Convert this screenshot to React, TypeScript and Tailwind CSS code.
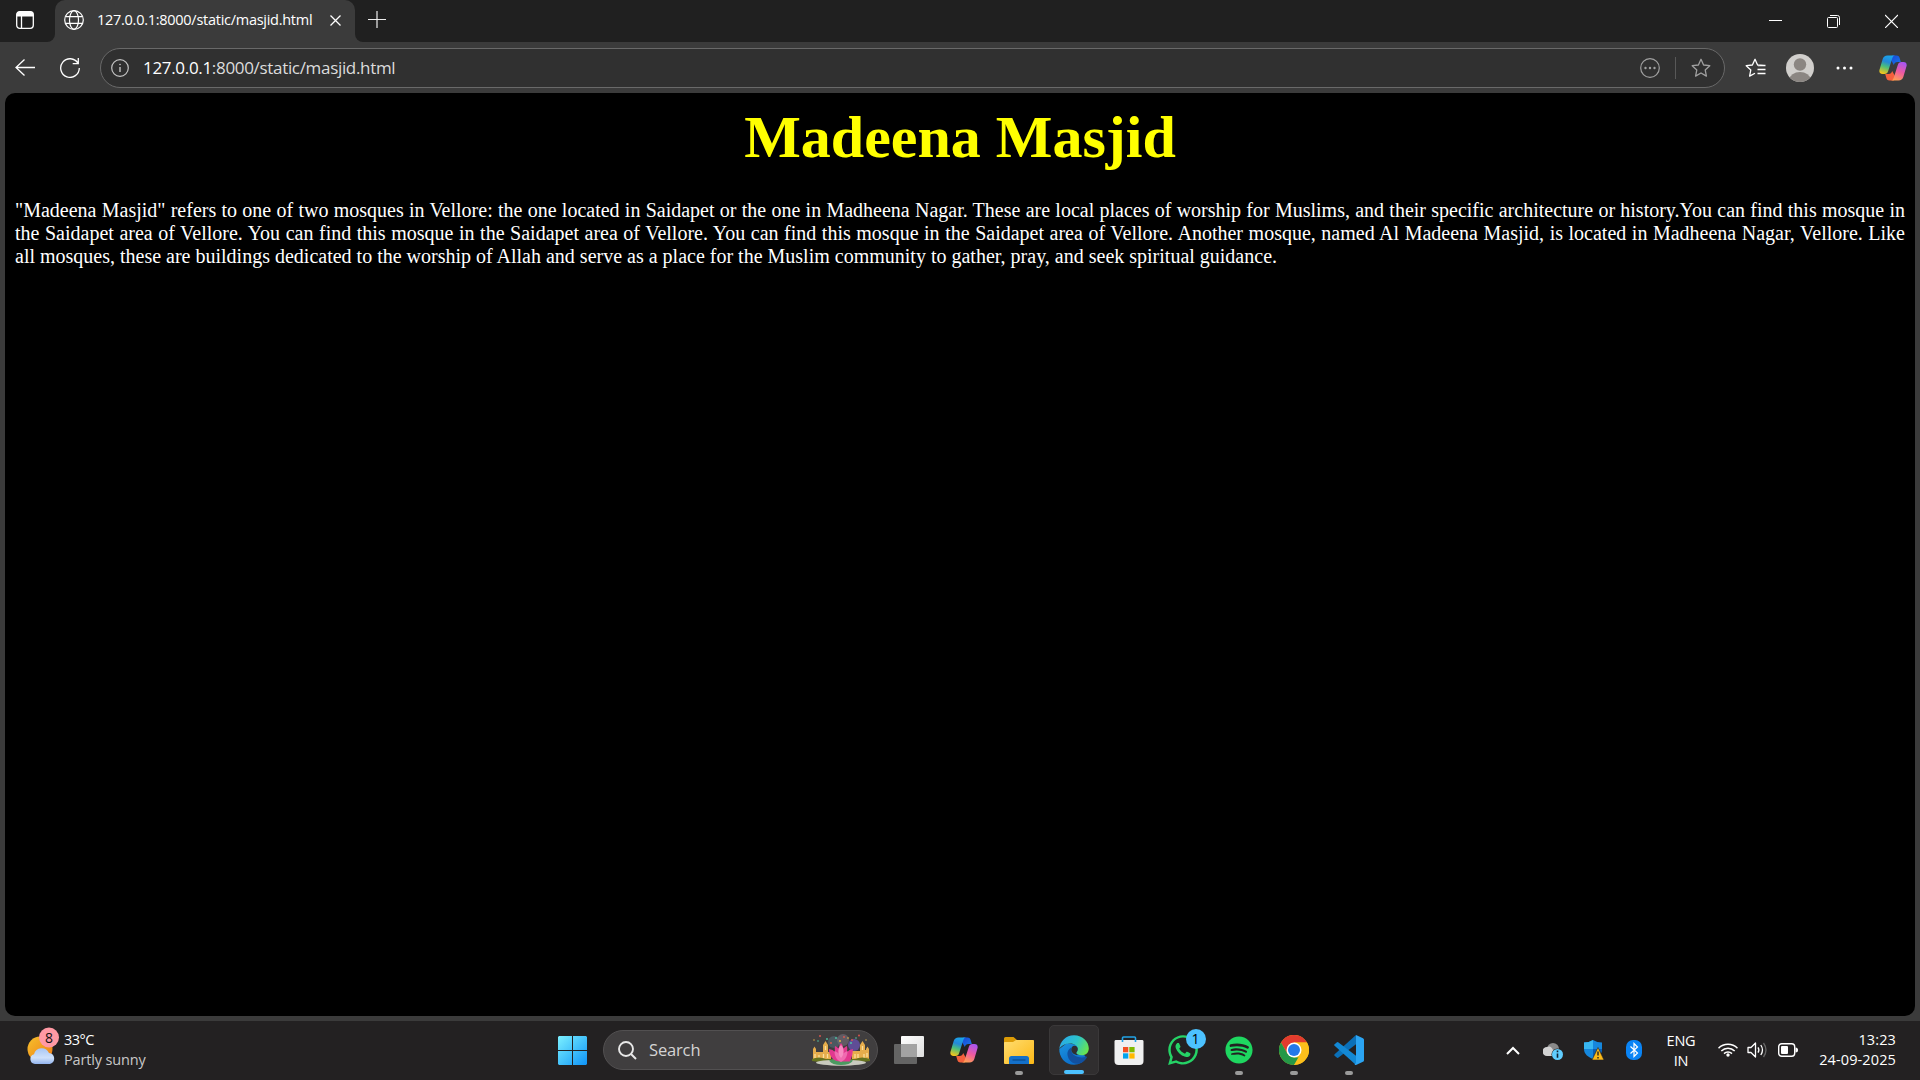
import React from "react";
import { FaSpotify, FaWhatsapp } from "react-icons/fa";

const ui = "font-['Open_Sans','Noto_Sans',sans-serif]";

function CopilotIcon({ id, className }: { id: string; className: string }) {
  return (
    <svg viewBox="0 0 28 26" className={className}>
      <defs>
        <linearGradient id={id + "a"} x1="0.6" y1="0" x2="0.3" y2="1">
          <stop offset="0" stopColor="#1aa5ea" />
          <stop offset="0.35" stopColor="#2488d8" />
          <stop offset="0.62" stopColor="#4bbf7a" />
          <stop offset="1" stopColor="#f4c51c" />
        </linearGradient>
        <linearGradient id={id + "b"} x1="0.7" y1="0" x2="0.3" y2="1">
          <stop offset="0" stopColor="#a855f0" />
          <stop offset="0.5" stopColor="#ee5aa0" />
          <stop offset="1" stopColor="#ffa052" />
        </linearGradient>
        <linearGradient id={id + "c"} x1="0" y1="0" x2="1" y2="1">
          <stop offset="0" stopColor="#1846d8" />
          <stop offset="1" stopColor="#1b7ae6" />
        </linearGradient>
      </defs>
      <path d="M13 0.5h4.5c2 0 2.8 1.2 3.3 3l1 3.6h-3.4c-2 0-3 1.2-3.6 3L12 5Z" fill={`url(#${id}c)`} />
      <path d="M15 25.500h-4.500c-2 0-2.800-1.200-3.300-3l-1-3.600h3.400c2 0 3-1.200 3.600-3L16 21Z" fill="#f4603c" />
      <path d="M8.500 0.500h8c-2 0-2.700 1.200-3.300 3l-4 12.400c-.8 2.200-1.700 3-3.700 3H3.500c-2.600 0-3.600-1.700-3-4.200L3.700 4C4.400 1.700 6 .5 8.500.5Z" fill={`url(#${id}a)`} />
      <path d="M19.500 25.500h-8c2 0 2.700-1.200 3.300-3l4-12.400c.8-2.200 1.700-3 3.700-3h2c2.600 0 3.600 1.700 3 4.200L24.300 22c-.7 2.300-2.300 3.500-4.800 3.500Z" fill={`url(#${id}b)`} />
    </svg>
  );
}

const starPath =
  "M10 1.300 12.600 7l6.200.7-4.600 4.200 1.200 6.200L10 15l-5.400 3.100 1.200-6.200L1.200 7.700 7.400 7Z";

function TabStrip() {
  return (
    <div className="flex h-[42px] bg-[#3b3b3b]">
      <div className="w-[55px] rounded-br-[8px] bg-[#202020] pl-4 pt-[11px]">
        <svg viewBox="0 0 18 18" className="h-[18px] w-[18px]" fill="none" stroke="#fff">
          <rect x="0.700" y="0.700" width="16.600" height="16.600" rx="3" strokeWidth="1.300" />
          <path d="M1 3.500a2.500 2.500 0 0 1 2.500-2.500h11A2.500 2.500 0 0 1 17 3.500V5H1Z" fill="#fff" />
          <path d="M5.500 5v12" strokeWidth="1.300" />
        </svg>
      </div>
      <div className="flex w-[300px] bg-[#202020]">
        <div className="flex h-[42px] w-[300px] items-start rounded-t-[10px] bg-[#3b3b3b]">
          <svg viewBox="0 0 20 20" className="ml-[9px] mt-[10px] h-5 w-5 shrink-0" fill="none" stroke="#fff" strokeWidth="1.200">
            <circle cx="10" cy="10" r="9.300" />
            <ellipse cx="10" cy="10" rx="4.500" ry="9.300" />
            <path d="M1.600 6.700h16.800M1.600 13.300h16.800" />
          </svg>
          <span className={`${ui} ml-[13px] mt-[9px] w-[233px] shrink-0 whitespace-nowrap text-[14.500px] leading-[22px] tracking-[-0.270px] text-white`}>
            127.0.0.1:8000/static/masjid.html
          </span>
          <svg viewBox="0 0 11 11" className="mt-[15px] h-[11px] w-[11px] shrink-0" stroke="#fff" strokeWidth="1.300">
            <path d="M.5.5l10 10M10.500.5l-10 10" />
          </svg>
        </div>
      </div>
      <div className="flex flex-1 rounded-bl-[8px] bg-[#202020]">
        <svg viewBox="0 0 18 18" className="ml-[13px] mt-[11px] h-[18px] w-[18px]" stroke="#eee" strokeWidth="1.200">
          <path d="M9 0v17M0 8.500h18" />
        </svg>
        <div className="ml-auto mr-[22px] mt-[14px] flex gap-[45px]">
          <svg viewBox="0 0 13 14" className="h-[14px] w-[13px]" stroke="#fff">
            <path d="M0 6.500h13" />
          </svg>
          <svg viewBox="0 0 13 14" className="h-[14px] w-[13px]" fill="none" stroke="#fff">
            <rect x="0.500" y="3.500" width="10" height="10" rx="1" />
            <path d="M3 1.500h7.500a2 2 0 0 1 2 2V11" />
          </svg>
          <svg viewBox="0 0 13 14" className="h-[14px] w-[13px]" stroke="#fff" strokeWidth="1.200">
            <path d="M0 1l13 13M13 1L0 14" />
          </svg>
        </div>
      </div>
    </div>
  );
}

function Toolbar() {
  return (
    <div className="flex h-[51px] items-start bg-[#3b3b3b] pt-[6px]">
      <svg viewBox="0 0 20 18" className="ml-[15px] mt-[11px] h-[18px] w-5" fill="none" stroke="#fff" strokeWidth="1.300">
        <path d="M20 8.500H1M9.500.5l-8.500 8 8.500 8" />
      </svg>
      <svg viewBox="0 0 20 20" className="ml-[25px] mt-[10px] h-5 w-5" fill="none" stroke="#fff" strokeWidth="1.300">
        <path d="M18 5.300A9.300 9.300 0 1 0 19.300 10M18.300 0v5.700h-5.600" />
      </svg>
      <div className="ml-5 flex h-10 w-[1625px] items-center rounded-full border border-[#696969] bg-[#303030]">
        <svg viewBox="0 0 18 18" className="ml-[10px] h-[18px] w-[18px]" fill="none" stroke="#c4c4c4" strokeWidth="1.200">
          <circle cx="9" cy="9" r="8.300" />
          <path d="M9 8v5" strokeWidth="1.400" />
          <circle cx="9" cy="5.500" r=".5" fill="#c4c4c4" strokeWidth=".7" />
        </svg>
        <span className={`${ui} ml-[14px] whitespace-nowrap text-[17px] leading-6 tracking-[-0.320px] text-[#dcdcdc]`}>
          <span className="text-white">127.0.0.1</span>:8000/static/masjid.html
        </span>
        <svg viewBox="0 0 20 20" className="ml-auto h-5 w-5" fill="none" stroke="#a0a0a0" strokeWidth="1.200">
          <circle cx="10" cy="10" r="9.300" />
          <g fill="#a0a0a0" stroke="none">
            <circle cx="5.500" cy="10" r="1.200" />
            <circle cx="10" cy="10" r="1.200" />
            <circle cx="14.500" cy="10" r="1.200" />
          </g>
        </svg>
        <div className="ml-[15px] h-[22px] w-px bg-[#585858]" />
        <svg viewBox="0 0 20 20" className="ml-[15px] mr-[13px] h-5 w-5" fill="none" stroke="#a0a0a0" strokeWidth="1.300" strokeLinejoin="round">
          <path d={starPath} />
        </svg>
      </div>
      <svg viewBox="0 0 21 20" className="ml-5 mt-[10px] h-5 w-[21px]" fill="none" stroke="#fff" strokeWidth="1.300" strokeLinejoin="round">
        <path d="M19 7.500 12.600 7 10 1.300 7.400 7l-6.200.7 4.600 4.200-1.200 6.200L10 15.200M13 7.500h7.500M12.500 11.500h8M12.500 15.500h8" />
      </svg>
      <svg viewBox="0 0 28 28" className="ml-5 mt-[6px] h-7 w-7">
        <defs>
          <clipPath id="avatar">
            <circle cx="14" cy="14" r="14" />
          </clipPath>
        </defs>
        <g clipPath="url(#avatar)">
          <rect width="28" height="28" fill="#d1cfcc" />
          <circle cx="14" cy="10.500" r="6.200" fill="#8b8682" />
          <ellipse cx="14" cy="25.500" rx="10.500" ry="7.500" fill="#8b8682" />
        </g>
      </svg>
      <svg viewBox="0 0 17 4" className="ml-[22px] mt-[18px] h-1 w-[17px]" fill="#fff">
        <circle cx="2" cy="2" r="1.500" />
        <circle cx="8.500" cy="2" r="1.500" />
        <circle cx="15" cy="2" r="1.500" />
      </svg>
      <CopilotIcon id="bar" className="ml-[26px] mt-[7px] h-[26px] w-7" />
    </div>
  );
}

function WebPage() {
  return (
    <div className="h-[928px] bg-[#3b3b3b] px-[5px]">
      <main className="h-[923px] overflow-hidden rounded-[10px] bg-black px-[10px] font-['Liberation_Serif',serif]">
        <h1 className="mt-[10px] h-[69px] text-center text-[60px] font-bold leading-[69px] text-[#ffff00]">
          Madeena Masjid
        </h1>
        <p className="mt-[27px] text-justify text-[20px] leading-[23px] text-white">
          "Madeena Masjid" refers to one of two mosques in Vellore: the one located in Saidapet or the one in Madheena
          Nagar. These are local places of worship for Muslims, and their specific architecture or history.You can find
          this mosque in the Saidapet area of Vellore. You can find this mosque in the Saidapet area of Vellore. You can
          find this mosque in the Saidapet area of Vellore. Another mosque, named Al Madeena Masjid, is located in
          Madheena Nagar, Vellore. Like all mosques, these are buildings dedicated to the worship of Allah and serve as
          a place for the Muslim community to gather, pray, and seek spiritual guidance.
        </p>
      </main>
    </div>
  );
}

function Weather() {
  return (
    <div className="flex w-[557px] pl-[27px]">
      <svg viewBox="0 0 32 38" className="mt-[6px] h-[38px] w-8">
        <defs>
          <linearGradient id="sun" x1="0" y1="0" x2="1" y2="1">
            <stop offset="0" stopColor="#f6c12c" />
            <stop offset="1" stopColor="#ee7a16" />
          </linearGradient>
          <linearGradient id="cloud" x1="0" y1="0" x2="0" y2="1">
            <stop offset="0" stopColor="#a9c7f5" />
            <stop offset=".6" stopColor="#cfe1fb" />
            <stop offset="1" stopColor="#92b4ee" />
          </linearGradient>
        </defs>
        <circle cx="13" cy="22" r="12.500" fill="url(#sun)" />
        <path d="M8 37a5 5 0 0 1-1-9.800 8 8 0 0 1 15-1.200 5.600 5.600 0 0 1 1 11Z" fill="url(#cloud)" />
        <circle cx="22" cy="10.500" r="10" fill="#ff99a4" />
        <text x="22" y="15.500" textAnchor="middle" fontSize="14" fill="#111" fontFamily="Open Sans">8</text>
      </svg>
      <div className={`${ui} ml-[5px] mt-[9px] whitespace-nowrap text-[14.500px] leading-5`}>
        <div className="tracking-[-0.500px] text-white">33°C</div>
        <div className="tracking-[-0.150px] text-[#c8c8c8]">Partly sunny</div>
      </div>
    </div>
  );
}

function SearchArt() {
  return (
    <svg viewBox="0 0 58 32" className="ml-auto mr-[7px] h-8 w-[58px]">
      <circle cx="22" cy="8" r="6" fill="#56707c" opacity=".55" />
      <circle cx="31" cy="6" r="6" fill="#77707c" opacity=".6" />
      <circle cx="42" cy="11" r="6" fill="#6a53b4" opacity=".75" />
      <g fill="#e6ad4c">
        <path d="M1 24V15l1.500-2.500L4 15v3h7v-7l2.500-4L16 11v7h3v7H1Z" />
        <path d="M57 24V15l-1.500-2.500L54 15v1h-1v-5l-2.500-4L48 11v6h-8v8h17Z" />
      </g>
      <path d="M3 20v4M7 21v3M13.500 12v4M11.500 20v4M15.500 20v4M43 20v4M46 20v4M50.500 12v4M52 20v4M55 19v4" stroke="#fbdf9c" strokeWidth="1.300" />
      <path d="M0 25q7-3 14 0h29q7-3 15 0v2q-29 5-58 0Z" fill="#66731f" />
      <ellipse cx="29" cy="28.700" rx="25" ry="3" fill="#c9cabf" />
      <path d="M17 26.500q12-5 24 0-3 4.500-12 4.500t-12-4.500Z" fill="#4b9a61" />
      <path d="M29 27.500C20 27.500 17 21 17 15q4 .5 6 3-.5-3 0-6 2 .5 3.500 2.500Q27 11 29 9q2 2 2.500 5.500 1.500-2 3.500-2.500.5 3 0 6 2-2.500 6-3 0 6-3 12.500Z" fill="#e2388f" />
      <path d="M29 28c-5-2-6.500-7-6.500-11 3 1 5.500 3 6.500 5 1-2 3.500-4 6.500-5 0 4-1.500 9-6.500 11Z" fill="#f06bb0" />
      <path d="M29 11c-3.500 3-3.500 9 0 13 3.500-4 3.500-10 0-13Z" fill="#f78cc2" />
      <g fill="#e2574f">
        <circle cx="8" cy="2" r=".9" /><circle cx="19" cy="9" r=".9" /><circle cx="47" cy="1.500" r=".9" /><circle cx="32" cy="3" r=".9" /><circle cx="40" cy="6" r=".9" />
      </g>
      <g fill="#4fc6a6">
        <circle cx="15" cy="5" r=".9" /><circle cx="24" cy="4" r=".9" /><circle cx="39" cy="9" r="1" /><circle cx="44" cy="4" r=".8" /><circle cx="6" cy="7" r=".8" />
      </g>
      <g fill="#f0c04a">
        <circle cx="28" cy="7" r=".9" /><circle cx="36" cy="4" r=".8" /><circle cx="2" cy="6" r=".7" /><circle cx="54" cy="6" r=".7" />
      </g>
    </svg>
  );
}

function Slot({ children, mark }: { children: React.ReactNode; mark?: boolean }) {
  return (
    <div className="flex w-[55px] flex-col items-center pt-[9px]">
      <div className="flex h-[39px] w-[55px] items-start justify-center">{children}</div>
      {mark && <div className="mt-[2px] h-1 w-2 rounded-full bg-[#9a9a9a]" />}
    </div>
  );
}

function EdgeIcon() {
  return (
    <svg viewBox="0 0 30 30" className="h-[30px] w-[30px]">
      <defs>
        <linearGradient id="edgeTop" x1="0" y1=".3" x2="1" y2=".7">
          <stop offset="0" stopColor="#2aa9e8" />
          <stop offset=".5" stopColor="#2cc3c9" />
          <stop offset="1" stopColor="#6be64b" />
        </linearGradient>
        <linearGradient id="edgeLeft" x1="0" y1="0" x2=".6" y2="1">
          <stop offset="0" stopColor="#1c94e0" />
          <stop offset="1" stopColor="#0a6bc8" />
        </linearGradient>
      </defs>
      <path d="M.3 14C0 22 6 29.800 15 29.800c5 0 10-3 12.300-7L18 10 8 8Z" fill="url(#edgeLeft)" />
      <path d="M.3 14C1 6 7 .2 15 .2c9 0 14.800 6.800 14.800 13 0 4.500-3 7-7 7-3.500 0-5.500-1.200-5.500-2.300 0-.9 1.400-1.400 1.400-4 0-3-3.200-5.400-7.600-5.400-4.600 0-9 2-10.800 5.500Z" fill="url(#edgeTop)" />
      <path d="M12.300 12.400c-4 2-5 6.600-2.700 11 2.700 5 9.400 7.400 14.400 3.300 2-1.600 3.400-3.300 3.900-4.500.3-.7-.4-1-1-.7-2.700 1.400-7.500 1.400-10.400-.4-3.600-2.200-5-5.500-4.200-8.700Z" fill="#12509f" />
      <path d="M15.500 10.800c2 .2 3.300 1.500 3.300 3.100 0 2.500-1.500 3-1.500 4 0 .8 1 1.600 3 2-4.800.6-8-2.300-8-5.200 0-2.300 1.400-3.900 3.200-3.900Z" fill="#302e2f" />
    </svg>
  );
}

function AppIcons() {
  return (
    <div className="flex">
      <Slot>
        <svg viewBox="0 0 30 28" className="mt-[6px] h-7 w-[30px]">
          <defs>
            <linearGradient id="pane" x1="0" y1="0" x2="1" y2="1">
              <stop offset="0" stopColor="#fff" />
              <stop offset="1" stopColor="#dedede" />
            </linearGradient>
          </defs>
          <rect x="7" y="0" width="23" height="21" rx="1" fill="url(#pane)" />
          <rect x="0" y="8" width="23" height="20" rx="1" fill="#646464" />
          <rect x="7" y="8" width="16" height="13" fill="#a3a3a3" />
        </svg>
      </Slot>
      <Slot>
        <CopilotIcon id="task" className="mt-[7px] h-[26px] w-7" />
      </Slot>
      <Slot mark>
        <svg viewBox="0 0 30 27" className="mt-[7px] h-[27px] w-[30px]">
          <defs>
            <linearGradient id="folder" x1="0" y1="0" x2="1" y2="1">
              <stop offset="0" stopColor="#ffdd70" />
              <stop offset="1" stopColor="#fcb816" />
            </linearGradient>
          </defs>
          <path d="M0 10V1.500Q0 0 1.500 0H9.500l3.500 3H28q2 0 2 2v5Z" fill="#dc9b06" />
          <path d="M0 5.500Q0 5 1 5H9L12 3H29Q30 3 30 4V26Q30 27 29 27H1Q0 27 0 26Z" fill="url(#folder)" />
          <path d="M5 27v-5.500Q5 19 7.500 19h15q2.500 0 2.500 2.500V27Z" fill="#1470c9" />
          <path d="M8.500 23h13" stroke="#0a4a8c" strokeWidth="1.200" />
        </svg>
      </Slot>
      <div className="flex w-[55px] justify-center pt-1">
        <div className="flex h-[50px] w-[50px] flex-col items-center rounded-[5px] border border-[#3a3839] bg-[#302e2f] pt-[9px]">
          <EdgeIcon />
          <div className="mt-[5px] h-1 w-5 shrink-0 rounded-full bg-[#4cc2ff]" />
        </div>
      </div>
      <Slot>
        <svg viewBox="0 0 30 29" className="mt-[6px] h-[29px] w-[30px]">
          <path d="M0.500 5.500Q0.500 4 1.500 4H28.500q1 0 1 1.500V25q0 4-4 4H4.500q-4 0-4-4Z" fill="#f0f0f0" />
          <path d="M8.500 6V2q0-1 1-1h11q1 0 1 1v4" fill="none" stroke="#22a4e8" strokeWidth="1.600" />
          <path d="M9 11h5.300v5.300H9Z" fill="#f25022" />
          <path d="M15.300 11h5.300v5.300h-5.300Z" fill="#7fba00" />
          <path d="M9 17.300h5.300v5.300H9Z" fill="#00a4ef" />
          <path d="M15.300 17.300h5.300v5.300h-5.300Z" fill="#ffb900" />
        </svg>
      </Slot>
      <Slot>
        <div className="relative mt-[5px]">
          <FaWhatsapp className="-ml-[2px] -mt-[2px] h-[34px] w-[34px] text-[#25d366]" />
          <div className={`${ui} absolute -right-[6px] -top-[6px] flex h-5 w-5 items-center justify-center rounded-full bg-[#4cc2ff] text-[14px] leading-none text-black`}>
            1
          </div>
        </div>
      </Slot>
      <Slot mark>
        <FaSpotify className="mt-[6px] h-7 w-7 text-[#1ed760]" />
      </Slot>
      <Slot mark>
        <svg viewBox="0 0 30 30" className="mt-[5px] h-[30px] w-[30px]">
          <circle cx="15" cy="15" r="15" fill="#fbbc12" />
          <path d="M2 7.500A15 15 0 0 1 28 7.500H15l-6.500 11.300Z" fill="#e33b2e" />
          <path d="M2 7.500 8.500 18.750 15 22.500h6.500L15 30A15 15 0 0 1 2 7.500Z" fill="#249847" />
          <path d="M28 7.500H15L21.500 18.750 15 30A15 15 0 0 0 28 7.500Z" fill="#fcbf1b" />
          <circle cx="15" cy="15" r="7.500" fill="#fff" />
          <circle cx="15" cy="15" r="6" fill="#2478e8" />
        </svg>
      </Slot>
      <Slot mark>
        <svg viewBox="0 0 30 30" className="mt-[5px] h-[30px] w-[30px]">
          <path d="M22 0 .6 19.300q-.8.800 0 1.500L2.700 22.600q.7.600 1.500.1L22 9.200Z" fill="#0b70b8" />
          <path d="M22 30 .6 10.700q-.8-.8 0-1.500L2.700 7.400q.7-.6 1.500-.1L22 20.800Z" fill="#1388d4" />
          <path d="M22 0l7 3.200q1 .5 1 1.500v20.600q0 1-1 1.500L22 30q-1 .1-1.500-.5L22 28Z" fill="#2ba4f2" />
        </svg>
      </Slot>
    </div>
  );
}

function SystemTray() {
  return (
    <div className={`${ui} ml-auto flex whitespace-nowrap text-[14.500px] leading-5 text-white`}>
      <svg viewBox="0 0 14 9" className="mt-[25px] h-[9px] w-[14px]" fill="none" stroke="#fff" strokeWidth="2">
        <path d="M1 8l6-6 6 6" />
      </svg>
      <svg viewBox="0 0 20 17" className="ml-[23px] mt-[22px] h-[17px] w-5">
        <circle cx="10" cy="6" r="6" fill="#8a8a8a" />
        <path d="M4 13a4.500 4.500 0 0 1 0-9q4-2 6 3l4 6Z" fill="#d2d2d2" />
        <circle cx="14.500" cy="11.500" r="6" fill="#232122" />
        <circle cx="14.500" cy="11.500" r="5.500" fill="#60cdff" />
        <path d="M14.500 10.500v4.300M14.500 7.500v1.700" stroke="#123" strokeWidth="1.600" />
      </svg>
      <svg viewBox="0 0 20 20" className="ml-[21px] mt-[19px] h-5 w-5">
        <path d="M9 0q4 2.500 9 2.500V9c0 5-4 8-9 10C4 17 0 14 0 9V2.500Q5 2.500 9 0Z" fill="#1687dc" />
        <path d="M9 0v9H0V2.500Q5 2.500 9 0Z" fill="#38b7f1" />
        <path d="M9 9h9c0 5-4 8-9 10Z" fill="#0a5db2" />
        <path d="M14 7.500 20 20H8Z" fill="#fcba19" stroke="#232122" strokeWidth=".6" />
        <path d="M14 11.500v4M14 17v1.500" stroke="#222" strokeWidth="1.400" />
      </svg>
      <svg viewBox="0 0 16 20" className="ml-[22px] mt-[19px] h-5 w-4">
        <rect width="16" height="20" rx="7" fill="#0a84f5" />
        <path d="M4.500 6.500l7 6.500L8 16.500v-13L11.500 7l-7 6.500" fill="none" stroke="#fff" strokeWidth="1.200" />
      </svg>
      <div className="ml-[23px] mt-[10px] w-[32px] text-center text-[14.500px] tracking-[-0.200px]">
        <div>ENG</div>
        <div>IN</div>
      </div>
      <svg viewBox="0 0 20 15" className="ml-[21px] mt-[21px] h-[15px] w-5" fill="none" stroke="#fff" strokeWidth="1.500">
        <path d="M.5 6.200a13.400 13.400 0 0 1 19 0M3.300 9a9.500 9.500 0 0 1 13.400 0M6 11.600a5.700 5.700 0 0 1 8 0" />
        <circle cx="10" cy="13" r="1.700" fill="#fff" stroke="none" />
      </svg>
      <svg viewBox="0 0 21 16" className="ml-[9px] mt-[21px] h-4 w-[21px]" fill="none" stroke="#fff" strokeWidth="1.300">
        <path d="M1 5.500h3L8.500 1v14L4 10.500H1Z" strokeLinejoin="round" />
        <path d="M11 5.300q1.800 2.700 0 5.400M13.800 3q3.400 5 0 10" />
        <path d="M16.500 1q5 7 0 14" stroke="#666" />
      </svg>
      <svg viewBox="0 0 20 14" className="ml-[10px] mt-[22px] h-[14px] w-5">
        <rect x=".7" y=".7" width="16" height="12.600" rx="3" fill="none" stroke="#fff" strokeWidth="1.400" />
        <rect x="3" y="3" width="7" height="8" rx="1" fill="#fff" />
        <path d="M17.500 4.500q2.500 0 2.500 2.500t-2.500 2.500Z" fill="#fff" />
      </svg>
      <div className="mr-[24px] ml-[18px] mt-[9px] w-[80px] text-right tracking-[0.120px]">
        <div>13:23</div>
        <div>24-09-2025</div>
      </div>
    </div>
  );
}

function Taskbar() {
  return (
    <div className="flex h-[59px] bg-[#232122]">
      <Weather />
      <svg viewBox="0 0 29 29" className="ml-[1px] mt-[15px] h-[29px] w-[29px]">
        <defs>
          <linearGradient id="win" x1="0" y1="0" x2="29" y2="29" gradientUnits="userSpaceOnUse">
            <stop offset="0" stopColor="#7cf0ff" />
            <stop offset=".5" stopColor="#45c3fb" />
            <stop offset="1" stopColor="#0f93f8" />
          </linearGradient>
        </defs>
        <path d="M1 0h13v14H0V1ZM15 0h13l1 1v13H15ZM0 15h14v14H1l-1-1ZM15 15h14v13l-1 1H15Z" fill="url(#win)" />
      </svg>
      <div className="ml-4 mt-[9px] flex h-10 w-[275px] items-center rounded-full border border-[#525051] bg-[#403e3f]">
        <svg viewBox="0 0 19 19" className="ml-[14px] h-[19px] w-[19px]" fill="none" stroke="#e8e8e8" strokeWidth="1.900">
          <circle cx="8" cy="8" r="7" />
          <path d="M13 13l5 5" />
        </svg>
        <span className={`${ui} ml-[12px] text-[16.500px] leading-6 tracking-[-0.150px] text-[#d4d4d4]`}>Search</span>
        <SearchArt />
      </div>
      <div className="ml-[3px]">
        <AppIcons />
      </div>
      <SystemTray />
    </div>
  );
}

export default function App() {
  return (
    <div className="flex h-[1080px] w-[1920px] flex-col overflow-hidden bg-[#3b3b3b]">
      <TabStrip />
      <Toolbar />
      <WebPage />
      <Taskbar />
    </div>
  );
}
